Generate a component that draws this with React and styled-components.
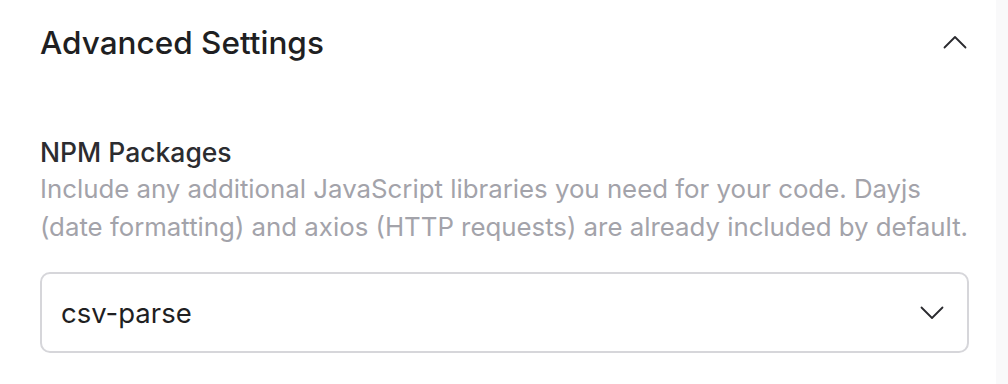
import React from "react";
import styled, { createGlobalStyle } from "styled-components";

const GlobalStyle = createGlobalStyle`
  html, body {
    margin: 0;
    padding: 0;
    background: #ffffff;
  }
  body {
    font-family: Inter, "Noto Sans", sans-serif;
    -webkit-font-smoothing: antialiased;
  }
`;

const Chevron = ({ up }) => (
  <svg width="24" height="14" viewBox="0 0 24 14" fill="none">
    <path
      d={up ? "M1.5 12.5 L12 2 L22.5 12.5" : "M1.5 1.5 L12 12 L22.5 1.5"}
      stroke="#2a2a2e"
      strokeWidth="1.8"
      strokeLinecap="round"
      strokeLinejoin="round"
    />
  </svg>
);

const App = () => {
  return (
    <>
      <GlobalStyle />
      <Page>
        <Panel>
          <Header>
            <Title>Advanced Settings</Title>
            <ToggleButton type="button" aria-label="Collapse">
              <Chevron up />
            </ToggleButton>
          </Header>

          <Field>
            <Label>NPM Packages</Label>
            <Help>
              Include any additional JavaScript libraries you need for your
              code. Dayjs (date formatting) and axios (HTTP requests) are
              already included by default.
            </Help>
            <Select>
              <SelectValue>csv-parse</SelectValue>
              <Chevron />
            </Select>
          </Field>
        </Panel>
        <Gutter />
      </Page>
    </>
  );
};

const Page = styled.div`
  display: flex;
  width: 1008px;
  height: 384px;
  overflow: hidden;
`;

const Panel = styled.div`
  flex: 1;
  padding: 19px 27px 0 40px;
`;

const Gutter = styled.div`
  width: 12px;
  background: #f9f9fa;
`;

const Header = styled.div`
  display: flex;
  align-items: center;
  justify-content: space-between;
  height: 46px;
`;

const Title = styled.h2`
  margin: 0;
  font-size: 31.5px;
  font-weight: 500;
  color: #1f1f22;
  letter-spacing: 0;
`;

const ToggleButton = styled.button`
  display: flex;
  align-items: center;
  background: transparent;
  border: none;
  padding: 0;
  margin-right: 2px;
  cursor: pointer;
`;

const Field = styled.div`
  display: flex;
  flex-direction: column;
  margin-top: 70px;
`;

const Label = styled.div`
  font-size: 26.5px;
  font-weight: 500;
  color: #2c2c30;
  line-height: 34px;
`;

const Help = styled.p`
  margin: 1px 0 0;
  font-size: 25.8px;
  line-height: 38px;
  color: #a3a3aa;
  max-width: 932px;
`;

const Select = styled.div`
  display: flex;
  align-items: center;
  justify-content: space-between;
  height: 81px;
  margin-top: 26px;
  padding: 0 23px 0 19px;
  border: 2px solid #d6d6da;
  border-radius: 10px;
  box-sizing: border-box;
`;

const SelectValue = styled.span`
  font-size: 27.5px;
  color: #1f1f22;
`;

export default App;
